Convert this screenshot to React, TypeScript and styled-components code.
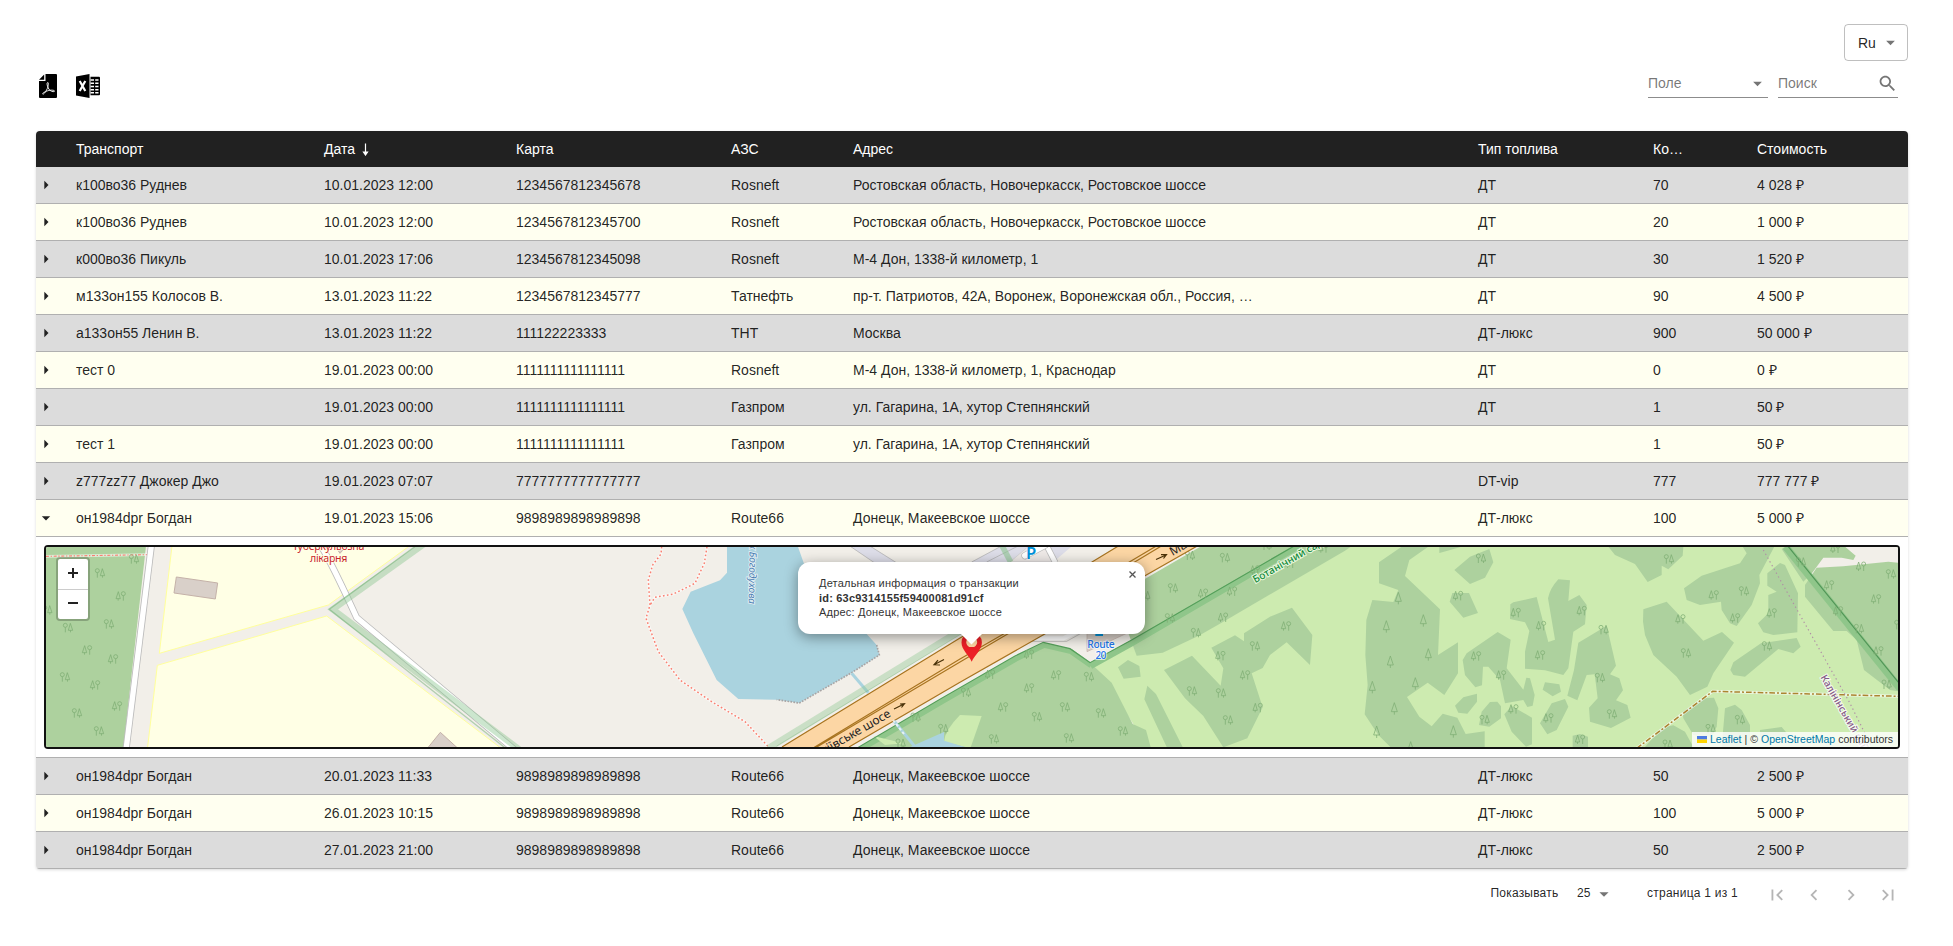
import React from "react";
import styled, { createGlobalStyle, css } from "styled-components";

const GlobalStyle = createGlobalStyle`
  *, *::before, *::after { box-sizing: border-box; }
  body {
    margin: 0;
    background: #fff;
    color: rgba(0, 0, 0, 0.87);
    font-family: "Liberation Sans", Arial, sans-serif;
    font-size: 14px;
  }
`;

const Page = styled.main`
  display: flex;
  flex-direction: column;
  width: 1872px;
  margin-left: 36px;
  padding-top: 24px;
`;

const LanguageBar = styled.div`
  display: flex;
  justify-content: flex-end;
`;

const LanguageSelect = styled.div`
  display: flex;
  align-items: center;
  justify-content: space-between;
  width: 64px;
  height: 37px;
  padding: 0 6px 0 13px;
  border: 1px solid rgba(0, 0, 0, 0.25);
  border-radius: 4px;
`;

const Toolbar = styled.div`
  display: flex;
  align-items: flex-start;
  justify-content: space-between;
  height: 70px;
  padding: 6px 10px 0 3px;
`;

const ExportButtons = styled.div`
  display: flex;
  gap: 19px;
  padding-top: 7px;
`;

const Filters = styled.div`
  display: flex;
  gap: 10px;
`;

const Field = styled.div`
  display: flex;
  align-items: center;
  justify-content: space-between;
  width: 120px;
  height: 31px;
  padding-top: 2px;
  color: rgba(0, 0, 0, 0.55);
  border-bottom: 1px solid rgba(0, 0, 0, 0.45);
`;

const Table = styled.section`
  border-radius: 4px;
  overflow: hidden;
  box-shadow: 0 1px 3px rgba(0, 0, 0, 0.15);
`;

const columns = css`
  display: grid;
  grid-template-columns: 40px 248px 192px 215px 122px 625px 175px 104px 1fr;
  align-items: center;
`;

const HeaderRow = styled.div`
  ${columns}
  height: 36px;
  color: #fff;
  background: #212121;
`;

const Row = styled.div<{ $shaded: boolean }>`
  ${columns}
  height: 37px;
  background: ${(p) => (p.$shaded ? "#dcdcdc" : "#fffff0")};
  border-bottom: 1px solid #b0b0b0;
`;

const Cell = styled.span`
  display: flex;
  align-items: center;
  gap: 6px;
  height: 16px;
  line-height: 16px;
  white-space: nowrap;
`;

const ExpandCell = styled.span`
  display: flex;
  align-items: center;
`;

const Detail = styled.div`
  height: 221px;
  padding: 8px;
  border-bottom: 1px solid #b0b0b0;
`;

const MapFrame = styled.div`
  position: relative;
  height: 204px;
  border: 2px solid #111;
  border-radius: 4px;
  overflow: hidden;
`;

const MapDrawing = styled.svg`
  display: block;
  width: 1852px;
  height: 200px;
`;

const ZoomControl = styled.div`
  position: absolute;
  left: 10px;
  top: 10px;
  display: flex;
  flex-direction: column;
  border: 2px solid rgba(0, 0, 0, 0.22);
  border-radius: 4px;
  background: #fff;
  background-clip: padding-box;
`;

const ZoomButton = styled.div`
  display: flex;
  align-items: center;
  justify-content: center;
  width: 30px;
  height: 30px;
  padding-bottom: 2px;
  color: #222;

  & + & {
    border-top: 1px solid #ccc;
  }
`;

const Popup = styled.div`
  position: absolute;
  left: 752px;
  top: 15px;
  width: 347px;
  height: 72px;
  padding: 14px 21px;
  border-radius: 12px;
  background: #fff;
  color: #333;
  font-size: 11px;
  line-height: 14.5px;
  letter-spacing: 0.2px;
  white-space: nowrap;
  box-shadow: 0 3px 14px rgba(0, 0, 0, 0.4);
`;

const PopupTip = styled.div`
  position: absolute;
  left: 163px;
  top: 72px;
  width: 21px;
  height: 10.5px;
  background: #fff;
  clip-path: polygon(0 0, 100% 0, 50% 100%);
`;

const PopupClose = styled.div`
  position: absolute;
  right: 9px;
  top: 9px;
  display: flex;
`;

const Attribution = styled.div`
  position: absolute;
  right: 0;
  bottom: 0;
  display: flex;
  align-items: center;
  gap: 3px;
  height: 15px;
  width: 206px;
  padding: 0 5px 1px;
  color: #333;
  font-size: 10.5px;
  white-space: nowrap;
  background: rgba(255, 255, 255, 0.8);
`;

const Credit = styled.span`
  color: #0078a8;
`;

const Pagination = styled.footer`
  display: flex;
  align-items: center;
  height: 49px;
  font-size: 12px;
  padding-left: 1454.5px;
`;

const PageLabel = styled.span`
  width: 86.5px;
  padding-bottom: 2px;
  letter-spacing: 0.2px;
`;

const PageSize = styled.span`
  display: flex;
  align-items: center;
  gap: 3px;
  width: 70px;
`;

const PageSizeValue = styled.span`
  padding-bottom: 2px;
`;

const PageInfo = styled.span`
  width: 118.5px;
  padding-bottom: 2px;
  letter-spacing: 0.25px;
`;

const PageButtons = styled.span`
  display: flex;
  gap: 15px;
  padding-top: 2px;
`;

const PATHS = {
  down: "M7 10l5 5 5-5z",
  right: "M10 17l5-5-5-5z",
  search:
    "M15.5 14h-.79l-.28-.27C15.41 12.59 16 11.11 16 9.5 16 5.91 13.09 3 9.5 3S3 5.91 3 9.5 5.91 16 9.5 16c1.61 0 3.09-.59 4.23-1.57l.27.28v.79l5 4.99L20.49 19l-4.99-5zm-6 0C7.01 14 5 11.99 5 9.5S7.01 5 9.5 5 14 7.01 14 9.5 11.99 14 9.5 14z",
  first: "M18.41 16.59L13.82 12l4.59-4.59L17 6l-6 6 6 6zM6 6h2v12H6z",
  prev: "M15.41 7.41L14 6l-6 6 6 6 1.41-1.41L10.83 12z",
  next: "M10 6L8.59 7.41 13.17 12l-4.58 4.59L10 18l6-6z",
  last: "M5.59 7.41L10.18 12l-4.59 4.59L7 18l6-6-6-6zM16 6h2v12h-2z",
};

function Glyph({ name, size, fill }: { name: keyof typeof PATHS; size: number; fill: string }) {
  return (
    <svg width={size} height={size} viewBox="0 0 24 24" fill={fill}>
      <path d={PATHS[name]} />
    </svg>
  );
}

function PdfIcon() {
  return (
    <svg width="18" height="24" viewBox="0 0 18 24">
      <path d="M6.5 0H17q1 0 1 1v22q0 1-1 1H1q-1 0-1-1V7h6.500z" fill="#000" />
      <path d="M5.200 .5V5.700H0z" fill="#000" />
      <path
        d="M8.700 8.500C7.500 8.800 8 12 9.800 15c1.300 2 4.200 3.300 5.600 2.400.8-1.200-3.200-1.800-6.700-.6-2.700.8-5.500 2.400-5 3.200.8 1 3.400-2.600 4.700-5.700 1-2.500 1.400-5.800.3-5.800z"
        fill="none"
        stroke="#fff"
        strokeWidth="0.9"
      />
    </svg>
  );
}

function ExcelIcon() {
  return (
    <svg width="24" height="24" viewBox="0 0 24 24">
      <path d="M0 2.500L13.500 0v24L0 21.500z" fill="#000" />
      <path d="M3.700 7l5.600 10M9.300 7l-5.600 10" stroke="#fff" strokeWidth="2.200" />
      <path d="M14.500 2.800H23q1 0 1 1v16.500q0 1-1 1h-8.500z" fill="#000" />
      <path d="M14.500 6H18M19.200 6h3.300M14.500 9.300H18M19.200 9.300h3.300M14.500 12.500H18M19.200 12.500h3.300M14.500 15.700H18M19.200 15.700h3.300M14.500 18.800H18M19.200 18.800h3.300" stroke="#fff" strokeWidth="1.400" />
    </svg>
  );
}

const WOOD = "#add19e";
const PARK = "#cdebb0";
const FIELD = "#ffffe5";
const LAND = "#f2efe9";
const WATER = "#aad3df";

type TreeKind = "m" | "w" | "c";
type Tree = [TreeKind, number, number];

function Trees({ items }: { items: Tree[] }) {
  return (
    <g fill="none" stroke="#7fae74" strokeWidth="2.300">
      {items.map(([kind, x, y]) => (
        <use key={`${x}-${y}`} href={`#tree-${kind}`} x={x} y={y} />
      ))}
    </g>
  );
}

const westTrees: Tree[] = [
  ["m", 312, 177], ["m", 210, 219], ["w", 272, 288], ["m", 52, 330], ["m", 237, 372], ["m", 114, 383],
  ["w", 171, 450], ["w", 249, 477], ["m", 105, 531], ["w", 195, 555], ["w", 261, 618], ["m", 141, 639],
  ["m", 207, 693],
];
const centreTrees: Tree[] = [
  ["m", 855, 83], ["w", 1150, 54], ["m", 980, 46], ["m", 750, 76], ["w", 945, 120], ["m", 699, 174], ["w", 789, 190], ["w", 876, 184],
  ["m", 616, 197], ["w", 849, 262], ["m", 690, 264], ["m", 768, 308], ["w", 1038, 288], ["m", 945, 348], ["w", 841, 377], ["w", 1050, 100],
  ["w", 915, 435], ["m", 756, 483], ["m", 843, 489], ["w", 953, 533], ["m", 864, 570], ["w", 267, 373], ["w", 150, 433],
  ["w", 348, 435], ["m", 447, 440], ["w", 267, 474], ["m", 78, 487], ["w", 189, 531], ["m", 375, 531], ["m", 291, 560],
  ["m", 483, 549], ["m", 549, 603], ["m", 387, 624], ["m", 162, 627], ["m", 10, 596], ["m", -118, 640], ["m", -73, 562],
];
const parkTrees: Tree[] = [
  ["m", 723, 40], ["w", 654, 152], ["w", 827, 203], ["w", 903, 242], ["w", 900, 330], ["w", 708, 333], ["w", 783, 390],
  ["m", 734, 524], ["w", 925, 519], ["w", 820, 492],
  ["c", 475, 159], ["c", 550, 226], ["c", 439, 244], ["c", 451, 350], ["c", 565, 328], ["c", 397, 426], ["c", 526, 415],
  ["c", 463, 490], ["c", 640, 559], ["c", 410, 560], ["c", 512, 607],
];
const eastTrees: Tree[] = [
  ["m", 327, 42], ["w", 461, 150], ["m", 552, 138], ["w", 525, 219], ["w", 635, 204], ["w", 361, 222], ["m", 378, 324],
  ["m", 621, 303], ["w", 65, 197], ["m", 120, 398], ["m", 156, 507], ["m", 131, 254], ["w", 60, 583], ["m", 540, 524],
  ["m", 452, 551], ["m", 323, 598], ["m", 993, 87], ["w", 948, 162], ["w", 807, 120], ["m", 723, 51], ["w", 834, 198],
  ["m", 897, 251], ["w", 955, 318], ["m", 980, 418], ["w", 903, 64], ["w", 826, 10], ["m", 1018, 239],
];

function MapCanvas() {
  return (
    <MapDrawing viewBox="46 547 1852 200" fontFamily='"Noto Sans", sans-serif'>
      <defs>
        <g id="tree-m">
          <circle cx="-8" cy="-7" r="6" />
          <path d="M-8-1V14M7-13L1 8H14ZM7.500 8V14" />
        </g>
        <g id="tree-w">
          <circle cx="8" cy="-7" r="6" />
          <path d="M8-1V14M-7-13L-14 8H-1ZM-7.500 8V14" />
        </g>
        <g id="tree-c">
          <path d="M0-17L-9 10H9ZM0 10V19" />
        </g>
      </defs>
      <rect x="46" y="547" width="1852" height="200" fill={LAND} />

      {/* western wood and fields */}
      <g transform="translate(30 500) scale(.3333333)">
        <path d="M45 138H348L280 745H45Z" fill={WOOD} />
        <path d="M48 169L356 164" stroke="#fff" strokeOpacity=".6" strokeWidth="8" />
        <path d="M48 169L356 164" stroke="#fa8072" strokeWidth="3.500" strokeDasharray="9 5 4 5" />
        <path d="M426 138H1138L895 315L388 460Z" fill={FIELD} stroke="#ffff9c" strokeWidth="3" />
        <path d="M382 496L890 348L1440 765H350Z" fill={FIELD} stroke="#ffff9c" strokeWidth="3" />
        <path d="M439 231L563 249L556 297L432 279ZM1231 697L1180 760H1300ZM915 138L930 160L950 138Z" fill="#d9d0c9" stroke="#c4b1a8" strokeWidth="3" />
        <path d="M365 130L288 750" stroke="#bbb" strokeWidth="21" />
        <path d="M365 130L288 750" stroke="#fff" strokeWidth="16" />
        <path d="M868 130Q900 178 980 353L1470 763" fill="none" stroke="#bbb" strokeWidth="21" />
        <path d="M868 130Q900 178 980 353L1470 763" fill="none" stroke="#fff" strokeWidth="16" />
        <path d="M1185 130L908 328L1470 750" fill="none" stroke="#8fc792" strokeOpacity=".45" strokeWidth="19" />
        <path d="M1157 138L898 328L1450 763" fill="none" stroke="#549f5a" strokeOpacity=".4" strokeWidth="4" />
        <Trees items={westTrees} />
        <g fontSize="32" textAnchor="middle" fill="#c8232c" stroke={FIELD} strokeWidth="5" paintOrder="stroke">
          <text x="896" y="149" textLength="214">туберкульозна</text>
          <text x="896" y="185" textLength="112">лікарня</text>
        </g>
      </g>

      {/* pond, footpaths and the stream */}
      <g transform="translate(480 530) scale(.3333333)">
        <path d="M741 45H952L1000 180L1160 312L1190 345L1198 375L1115 428L958 519L890 509L775 507L710 450L640 310L607 237L632 185L720 151L741 128Z" fill={WATER} />
        <path d="M1190 345L1198 375L1115 428L958 519L890 509" fill="none" stroke="#a8a4a4" strokeWidth="5" strokeDasharray="5 4" />
        <path d="M545 50L543 72L518 105L505 150L510 225L498 265L535 365L600 450L690 512L795 575L865 650M681 50L673 100L645 160L580 192L525 202L510 225" fill="none" stroke="#fff" strokeOpacity=".6" strokeWidth="8" />
        <path d="M545 50L543 72L518 105L505 150L510 225L498 265L535 365L600 450L690 512L795 575L865 650M681 50L673 100L645 160L580 192L525 202L510 225" fill="none" stroke="#fa8072" strokeWidth="4.500" strokeDasharray="5 7" />
        <path d="M1115 430L1165 488" stroke={WATER} strokeWidth="9" />
        <path d="M1105 45L1230 130L1300 130L1165 45Z" fill="#dddde8" stroke="#aaa" strokeWidth="2" />
        <path d="M865 655L1460 290" stroke="#8fc792" strokeOpacity=".4" strokeWidth="20" />
        <path d="M890 648L1460 302" stroke="#549f5a" strokeOpacity=".25" strokeWidth="3" />
        <text transform="translate(806 222) rotate(91)" textAnchor="end" fontSize="30" fontStyle="italic" fill="#4d80b3" stroke="#e6f1f5" strokeWidth="5" paintOrder="stroke">
          ставок Богодухова
        </text>
      </g>

      {/* woods and garden south of the highway */}
      <g transform="translate(940 530) scale(.3333333)">
        <path d="M450 398L575 330L1060 45H2890V660H630L540 520Z" fill={PARK} />
        <path d="M-250 655L0 508L225 378L310 337L390 356L450 398L515 458L578 582L618 600L633 655Z" fill={WOOD} />
        <path d="M-250 655L0 508L225 378L310 337L390 356L450 398" fill="none" stroke="#8fc68a" strokeWidth="15" transform="translate(3 9)" />
        <path d="M12 635Q15 600 60 555L125 558L92 652L76 651Z" fill={PARK} />
        <path d="M12 606V632L75 651H-90Z" fill={WATER} />
        <path d="M-200 618L-165 645L-110 640Z" fill={PARK} />
        <path d="M600 155L790 45H1240L1215 62L845 278L775 318L668 368L590 377L565 310Z" fill={WOOD} />
        <path d="M452 408L575 340L1080 46" fill="none" stroke="#8fc68a" strokeWidth="18" />
        <path d="M-250 655L0 508L225 378L310 337L390 356L450 398L575 330L1068 45" fill="none" stroke="#549f5a" strokeWidth="3.500" />
        <path d="M564 390L598 408L602 440L551 446L534 412ZM622 467L648 492L730 655H682L613 508ZM672 420L756 377L842 467L850 415L814 353L885 316L912 334V310L990 260L1056 233L1117 315L1110 405L1040 337L990 375L968 414L935 430L968 532L922 625L850 652L790 558L735 505Z" fill={WOOD} />
        <Trees items={centreTrees} />
        {/* yards and car park near the road */}
        <path d="M95 96L190 45H400L340 96Z" fill="#dddde8" />
        <path d="M95 96L190 45M140 96L240 45" stroke="#aaa" strokeWidth="2" />
        <path d="M210 96L270 45H325L350 96Z" fill="#eee9e7" stroke="#ccc" strokeWidth="2" />
        <path d="M185 45L212 96" stroke="#8fc792" strokeOpacity=".6" strokeWidth="17" />
        <path d="M319 45L346 98" stroke="#bbb" strokeWidth="19" />
        <path d="M319 45L346 98" stroke="#fff" strokeWidth="14" />
        <path d="M255 77L315 45" stroke="#bbb" strokeWidth="22" strokeLinecap="round" />
        <path d="M255 77L315 45" stroke="#fff" strokeWidth="18" strokeLinecap="round" />
        <text x="258" y="87" fontSize="50" fontWeight="600" fill="#0092da" stroke="#fff" strokeWidth="3" paintOrder="stroke">P</text>
        <path d="M230 334H380L430 306" fill="none" stroke="#aaa" strokeWidth="2" />
        <path d="M260 325H370L420 300" fill="none" stroke="#fff" strokeWidth="13" />
        <path d="M441 300V365L560 310V300Z" fill="#d9d0c9" stroke="#c4b1a8" strokeWidth="2" />
        <rect x="466" y="300" width="23" height="18" fill="#0092da" />
        <g fontSize="31" fontWeight="500" fill="#2375e8" stroke="#fff" strokeWidth="5" strokeOpacity=".8" paintOrder="stroke" textAnchor="middle">
          <text x="483" y="353" textLength="82">Route</text>
          <text x="483" y="388" textLength="33">20</text>
        </g>
        <text transform="translate(946 160) rotate(-29.5)" fontSize="31" fontWeight="500" fill="#138a3a" stroke="#e9f8de" strokeWidth="6" paintOrder="stroke">
          Ботанічний сад
        </text>
      </g>

      {/* highway */}
      <path d="M782 747L960 638L1092 562L1120 545H1199L1145 575.700L1043 635L960 682.300L849 747Z" fill="#fcd6a4" />
      <g fill="none" stroke="#a87420" strokeWidth="1.200">
        <path d="M782 747L960 638L1092 562L1120 545M849 747L960 682.300L1043 635L1145 575.700L1199 545" />
        <path d="M814 747.500L960 659L1007 632L1110 573.500L1158 545M816 747.500L960 662L1011 632L1114 574.500L1163 545" />
      </g>
      <g fill="none" stroke="#4a3208" strokeWidth="1.200">
        <path d="M944 659.500L934.500 664.500M938 660.200L934 664.800L940 665M894 709L904 704M900 704L904.500 703.700L901.500 707.500M1156 559.500L1166 555M1161 554.600L1166.500 554.500L1163.500 558.500" />
      </g>
      <g fontSize="12" fill="#222">
        <text transform="translate(891.500 716) rotate(-30)" textAnchor="end">Макіївське шосе</text>
        <text transform="translate(1172.500 556) rotate(-30)">Макіївське шосе</text>
      </g>
      <path d="M894 721L916 748" stroke={WATER} strokeWidth="3" />
      <path d="M893 720L904 734" stroke="#fff" strokeOpacity=".7" strokeWidth="2" strokeDasharray="3 2" />

      {/* garden groves */}
      <g transform="translate(1240 545) scale(.3333333)">
        <path d="M485 5H565L508 45L495 93L600 193L594 330L654 292V385L613 450L563 413L501 456L538 515L575 544L608 506L652 518L677 567L734 559V610H455L415 570L374 508L383 420L376 330L379 225L397 165L460 171L475 135L417 115V52ZM598 5H665L620 18L598 24Z" fill={WOOD} />
        <path d="M643 75L690 35L748 12L760 52L735 98L690 117ZM637 144H687L714 204L670 218L629 170ZM680 325L773 261L812 284L800 370L850 434L859 398L870 400L884 450L878 482L862 486L850 465L795 475L780 405L745 365H729L726 421L706 427L675 390L668 345ZM811 178L820 172L890 156L925 291L945 284L924 160Q930 130 955 103L990 106L985 168L1018 150L1040 180L1035 238L1000 260L985 370L970 390L915 376L855 371V320L868 258L855 232L810 222ZM645 482L670 457L711 446V470L682 506L655 503ZM750 471L772 470L783 484V520L748 545L717 540L725 500ZM815 483L876 518V598L858 605L815 560L793 508ZM915 412L958 418L963 440L938 454L908 434ZM935 475L975 462L985 485L950 555L922 568L900 535Z" fill={WOOD} />
        <Trees items={parkTrees} />
      </g>
      <g transform="translate(1560 545) scale(.3333333)">
        <path d="M145 5H370L368 32L325 73L305 62V90L263 111L225 57L165 30ZM372 130L425 92L540 55L560 25L548 5H643L598 90L600 115L575 180L530 243L510 235L485 195L483 170L420 180L380 165ZM250 193L320 170L430 287L486 261L522 293L460 385L442 425L390 450L350 395L280 330L255 270L249 230ZM660 54L675 60L714 145L712 262L640 270L610 262L594 235L625 205V150L650 140L622 122V85ZM603 295L710 279L722 305L700 325L655 312L555 395L520 390L511 375L520 352ZM55 293L140 242L168 362L150 388L178 400L189 436L168 466L202 480L212 518L153 549L90 530L87 488L113 460L104 388L80 390L52 466L22 452L42 375ZM430 460L462 458L475 490L470 545L455 575L400 570L370 520L368 500ZM495 490L525 479L545 495L570 540V606H485ZM255 606L305 548L340 541L375 560L400 606ZM38 572L60 567L84 575V606H38ZM600 555L665 546L690 575H600Z" fill={WOOD} />
        <path d="M785 5H1020V60L775 72L757 92L748 84Z" fill={LAND} />
        <path d="M675 5H855L887 32L880 45L845 38H790L758 82L730 110L665 12ZM735 120L770 68L850 64L985 50L1020 54V440L990 435L912 375L890 285L860 258H820L735 155Z" fill={WOOD} />
        <path d="M677 5L1020 430" stroke="#8fc68a" strokeWidth="22" />
        <path d="M685 5L1020 418" stroke="#4f9455" strokeWidth="3.500" />
        <Trees items={eastTrees} />
        <path d="M230 610L458 439L1020 454" fill="none" stroke="#fff" strokeOpacity=".6" strokeWidth="9" />
        <path d="M230 610L458 439L1020 454" fill="none" stroke="#ac8430" strokeWidth="4.500" strokeDasharray="17 6 6 6" />
        <path d="M610 15L720 210L870 475L935 606" fill="none" stroke="#b08fa5" strokeWidth="3.500" strokeDasharray="4 9" />
        <text transform="translate(781 397) rotate(60)" fontSize="30" fontWeight="500" fill="#855a87" stroke="#fff" strokeOpacity=".8" strokeWidth="6" paintOrder="stroke">
          Калінінський район
        </text>
      </g>

      {/* selected station */}
      <path
        d="M971.700 661.800C969 655 961.500 650 961.500 642.500A10.200 10.200 0 0 1 981.900 642.500C981.900 650 974.500 655 971.700 661.800ZM971.700 637.500A4.800 4.800 0 1 0 971.700 647A4.800 4.800 0 1 0 971.700 637.500Z"
        fill="#ec2027"
        fillRule="evenodd"
      />
    </MapDrawing>
  );
}

function StationMap() {
  return (
    <MapFrame>
      <MapCanvas />
      <ZoomControl>
        <ZoomButton>
          <svg width="12" height="12" stroke="currentColor" strokeWidth="2">
            <path d="M1 6H11M6 1V11" />
          </svg>
        </ZoomButton>
        <ZoomButton>
          <svg width="12" height="12" stroke="currentColor" strokeWidth="2">
            <path d="M1 5H11" />
          </svg>
        </ZoomButton>
      </ZoomControl>
      <Popup>
        <div>Детальная информация о транзакции</div>
        <b>id: 63c9314155f59400081d91cf</b>
        <div>Адрес: Донецк, Макеевское шоссе</div>
        <PopupClose>
          <svg width="7" height="7" stroke="#555" strokeWidth="1.300">
            <path d="M.5.5l6 6M6.500.5l-6 6" />
          </svg>
        </PopupClose>
        <PopupTip />
      </Popup>
      <Attribution>
        <svg width="10" height="7">
          <rect width="10" height="3.500" fill="#4c7be1" />
          <rect y="3.500" width="10" height="3.500" fill="#ffd500" />
        </svg>
        <Credit>Leaflet</Credit>
        <span>|</span>
        <span>©</span>
        <Credit>OpenStreetMap</Credit>
        <span>contributors</span>
      </Attribution>
    </MapFrame>
  );
}

const HEADERS = ["Транспорт", "Дата", "Карта", "АЗС", "Адрес", "Тип топлива", "Ко…", "Стоимость"];

const ROWS: string[][] = [
  ["к100во36 Руднев", "10.01.2023 12:00", "1234567812345678", "Rosneft", "Ростовская область, Новочеркасск, Ростовское шоссе", "ДТ", "70", "4 028 ₽"],
  ["к100во36 Руднев", "10.01.2023 12:00", "1234567812345700", "Rosneft", "Ростовская область, Новочеркасск, Ростовское шоссе", "ДТ", "20", "1 000 ₽"],
  ["к000во36 Пикуль", "10.01.2023 17:06", "1234567812345098", "Rosneft", "М-4 Дон, 1338-й километр, 1", "ДТ", "30", "1 520 ₽"],
  ["м133он155 Колосов В.", "13.01.2023 11:22", "1234567812345777", "Татнефть", "пр-т. Патриотов, 42А, Воронеж, Воронежская обл., Россия, …", "ДТ", "90", "4 500 ₽"],
  ["а133он55 Ленин В.", "13.01.2023 11:22", "111122223333", "ТНТ", "Москва", "ДТ-люкс", "900", "50 000 ₽"],
  ["тест 0", "19.01.2023 00:00", "1111111111111111", "Rosneft", "М-4 Дон, 1338-й километр, 1, Краснодар", "ДТ", "0", "0 ₽"],
  ["", "19.01.2023 00:00", "1111111111111111", "Газпром", "ул. Гагарина, 1А, хутор Степнянский", "ДТ", "1", "50 ₽"],
  ["тест 1", "19.01.2023 00:00", "1111111111111111", "Газпром", "ул. Гагарина, 1А, хутор Степнянский", "", "1", "50 ₽"],
  ["z777zz77 Джокер Джо", "19.01.2023 07:07", "7777777777777777", "", "", "DT-vip", "777", "777 777 ₽"],
  ["он1984dpr Богдан", "19.01.2023 15:06", "9898989898989898", "Route66", "Донецк, Макеевское шоссе", "ДТ-люкс", "100", "5 000 ₽"],
  ["он1984dpr Богдан", "20.01.2023 11:33", "9898989898989898", "Route66", "Донецк, Макеевское шоссе", "ДТ-люкс", "50", "2 500 ₽"],
  ["он1984dpr Богдан", "26.01.2023 10:15", "9898989898989898", "Route66", "Донецк, Макеевское шоссе", "ДТ-люкс", "100", "5 000 ₽"],
  ["он1984dpr Богдан", "27.01.2023 21:00", "9898989898989898", "Route66", "Донецк, Макеевское шоссе", "ДТ-люкс", "50", "2 500 ₽"],
];

const OPEN_ROW = 9;

export default function App() {
  return (
    <>
      <GlobalStyle />
      <Page>
        <LanguageBar>
          <LanguageSelect>
            Ru
            <Glyph name="down" size={21} fill="#757575" />
          </LanguageSelect>
        </LanguageBar>
        <Toolbar>
          <ExportButtons>
            <PdfIcon />
            <ExcelIcon />
          </ExportButtons>
          <Filters>
            <Field>
              Поле
              <Glyph name="down" size={21} fill="#757575" />
            </Field>
            <Field>
              Поиск
              <Glyph name="search" size={21} fill="#757575" />
            </Field>
          </Filters>
        </Toolbar>
        <Table>
          <HeaderRow>
            <span />
            {HEADERS.map((title) => (
              <Cell key={title}>
                {title}
                {title === "Дата" && (
                  <svg width="9" height="13" fill="none" stroke="#fff" strokeWidth="1.200">
                    <path d="M4.500 0.500V11" />
                    <path d="M2.500 9h4L4.500 12z" fill="#fff" />
                  </svg>
                )}
              </Cell>
            ))}
          </HeaderRow>
          {ROWS.map((row, index) => (
            <React.Fragment key={index}>
              <Row $shaded={index % 2 === 0}>
                <ExpandCell>
                  <Glyph name={index === OPEN_ROW ? "down" : "right"} size={20} fill="#222" />
                </ExpandCell>
                {row.map((text, column) => (
                  <Cell key={column}>{text}</Cell>
                ))}
              </Row>
              {index === OPEN_ROW && (
                <Detail>
                  <StationMap />
                </Detail>
              )}
            </React.Fragment>
          ))}
        </Table>
        <Pagination>
          <PageLabel>Показывать</PageLabel>
          <PageSize>
            <PageSizeValue>25</PageSizeValue>
            <Glyph name="down" size={22} fill="#757575" />
          </PageSize>
          <PageInfo>страница 1 из 1</PageInfo>
          <PageButtons>
            <Glyph name="first" size={22} fill="#b5b5b5" />
            <Glyph name="prev" size={22} fill="#b5b5b5" />
            <Glyph name="next" size={22} fill="#b5b5b5" />
            <Glyph name="last" size={22} fill="#b5b5b5" />
          </PageButtons>
        </Pagination>
      </Page>
    </>
  );
}
